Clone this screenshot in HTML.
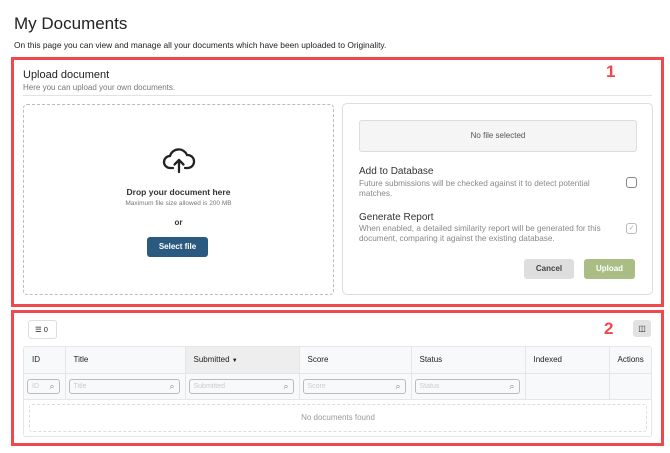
<!DOCTYPE html>
<html><head><meta charset="utf-8"><style>
*{box-sizing:border-box;margin:0;padding:0}
body{width:670px;height:453px;background:#fff;font-family:"Liberation Sans",sans-serif;color:#222;position:relative;overflow:hidden}
.a{position:absolute}
.red{position:absolute;border:3px solid #f0484c}
.cb{position:absolute;width:11px;height:11px;border:1px solid #888;border-radius:3px;background:#fff}
th,td{border-right:1px solid #e4e6ea;border-bottom:1px solid #e4e6ea;font-size:8px;font-weight:normal;text-align:left;padding-left:8px}
.f{display:block;height:15px;border:1px solid #bbb;border-radius:3px;font-size:7px;color:#ccc;padding:3px 4px;position:relative;margin-right:5px;margin-left:-5px}
.f:after{content:"\2315";position:absolute;right:4px;top:1px;color:#888;font-size:9px}
</style></head><body>
<div class="a" style="left:14px;top:14px;font-size:17px;color:#222">My Documents</div>
<div class="a" style="left:14px;top:40px;font-size:8.4px;color:#222">On this page you can view and manage all your documents which have been uploaded to Originality.</div>

<div class="red" style="left:11px;top:57px;width:653px;height:250px"></div>
<div class="a" style="left:606px;top:62px;font-size:17px;font-weight:bold;color:#f0484c">1</div>
<div class="a" style="left:23px;top:69px;font-size:11px;color:#222">Upload document</div>
<div class="a" style="left:23px;top:83px;font-size:8px;color:#777">Here you can upload your own documents.</div>
<div class="a" style="left:23px;top:95px;width:629px;height:1px;background:#e2e2e2"></div>

<div class="a" style="left:23px;top:104px;width:311px;height:191px;border:1px dashed #bbb;border-radius:4px"></div>
<svg class="a" style="left:162px;top:147px" width="34" height="27" viewBox="0 0 34 27"><path d="M11 21H8a6 6 0 0 1 0-12 9 9 0 0 1 17-1 6.5 6.5 0 0 1 1 13h-3" fill="none" stroke="#222" stroke-width="2.3" stroke-linecap="round"/><path d="M17 25V13M12.5 17.5L17 13l4.5 4.5" fill="none" stroke="#222" stroke-width="2.3" stroke-linecap="round" stroke-linejoin="round"/></svg>
<div class="a" style="left:23px;top:187px;width:311px;text-align:center;font-size:8.5px;font-weight:bold;color:#333">Drop your document here</div>
<div class="a" style="left:23px;top:200px;width:311px;text-align:center;font-size:6.5px;color:#777">Maximum file size allowed is 200 MB</div>
<div class="a" style="left:23px;top:218px;width:311px;text-align:center;font-size:8px;font-weight:bold;color:#333">or</div>
<div class="a" style="left:147px;top:237px;width:61px;height:20px;background:#2b5a80;border-radius:3px;color:#fff;font-size:8px;font-weight:bold;text-align:center;line-height:20px">Select file</div>

<div class="a" style="left:342px;top:103px;width:311px;height:192px;border:1px solid #ddd;border-radius:5px"></div>
<div class="a" style="left:359px;top:120px;width:278px;height:32px;border:1px solid #ddd;border-radius:3px;background:#f5f5f5;font-size:8px;color:#555;text-align:center;line-height:30px">No file selected</div>
<div class="a" style="left:359px;top:166px;font-size:10px;color:#333">Add to Database</div>
<div class="a" style="left:359px;top:179px;width:255px;font-size:8.2px;color:#888;line-height:9.5px">Future submissions will be checked against it to detect potential matches.</div>
<div class="cb" style="left:626px;top:177px"></div>
<div class="a" style="left:359px;top:212px;font-size:10px;color:#333">Generate Report</div>
<div class="a" style="left:359px;top:224px;width:265px;font-size:8.2px;color:#888;line-height:9.5px">When enabled, a detailed similarity report will be generated for this document, comparing it against the existing database.</div>
<div class="cb" style="left:626px;top:223px;border-color:#bbb;color:#aaa;font-size:7px;line-height:9px;text-align:center">✓</div>
<div class="a" style="left:524px;top:259px;width:50px;height:20px;background:#dedede;border-radius:3px;font-size:8px;font-weight:bold;color:#444;text-align:center;line-height:20px">Cancel</div>
<div class="a" style="left:584px;top:259px;width:51px;height:20px;background:#aabd85;border-radius:3px;font-size:8px;font-weight:bold;color:#fff;text-align:center;line-height:20px">Upload</div>

<div class="red" style="left:11px;top:310px;width:653px;height:136px"></div>
<div class="a" style="left:604px;top:319px;font-size:17px;font-weight:bold;color:#f0484c">2</div>
<div class="a" style="left:28px;top:320px;width:29px;height:19px;border:1px solid #ddd;border-radius:3px;font-size:7.5px;line-height:17px;padding-left:6px">☰ 0</div>
<div class="a" style="left:633px;top:320px;width:18px;height:17px;background:#e2e2e2;border-radius:3px;font-size:8px;text-align:center;line-height:17px">◫</div>

<div class="a" style="left:23px;top:346px;width:629px;height:91px;border:1px solid #e4e6ea;border-radius:3px;overflow:hidden">
<table style="border-collapse:collapse;width:629px;table-layout:fixed">
<colgroup><col style="width:41px"><col style="width:120px"><col style="width:114px"><col style="width:112px"><col style="width:114px"><col style="width:84px"><col style="width:44px"></colgroup>
<tr style="height:26px;background:#f8f9fa"><th>ID</th><th>Title</th><th style="background:#eee">Submitted <span style="font-size:6px">▼</span></th><th>Score</th><th>Status</th><th>Indexed</th><th style="border-right:0">Actions</th></tr>
<tr style="height:26px;background:#f8f9fa"><td><span class="f">ID</span></td><td><span class="f">Title</span></td><td><span class="f">Submitted</span></td><td><span class="f">Score</span></td><td><span class="f">Status</span></td><td></td><td style="border-right:0"></td></tr>
</table>
<div class="a" style="left:5px;top:57px;width:618px;height:28px;border:1px dashed #ddd;border-radius:3px;font-size:8px;color:#999;text-align:center;line-height:26px">No documents found</div>
</div>
</body></html>
